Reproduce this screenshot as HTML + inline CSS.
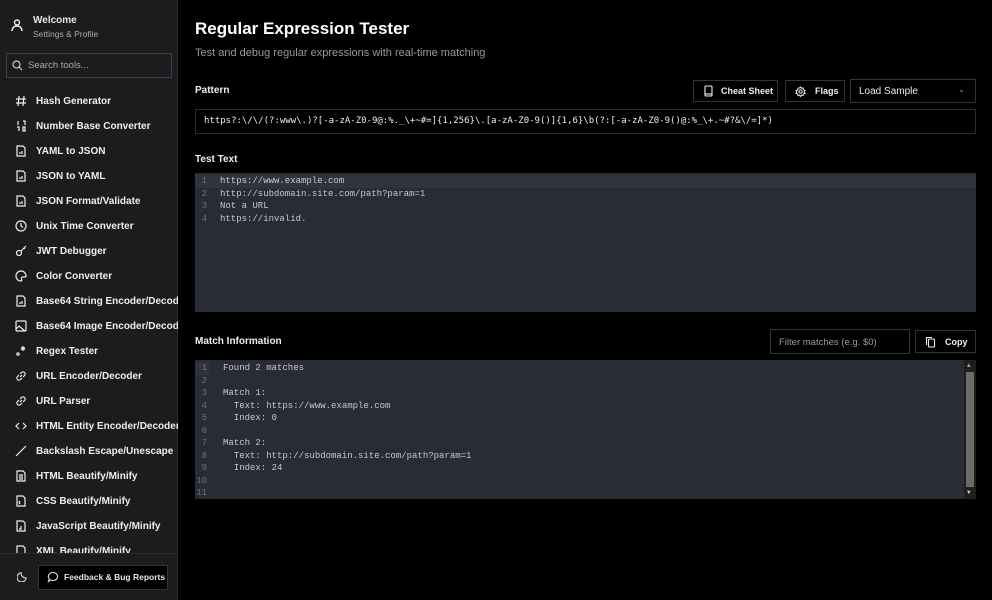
<!DOCTYPE html>
<html><head><meta charset="utf-8"><style>
*{box-sizing:border-box;margin:0;padding:0}
body{width:992px;height:600px;background:#000;font-family:"Liberation Sans",sans-serif;color:#e6e6e6;position:relative;overflow:hidden}
.sb{position:absolute;left:0;top:0;width:178px;height:600px;background:#1c1c1f;border-right:1px solid #2a2a2e}
.abs{position:absolute}
.item{position:absolute;left:0;height:20px;display:flex;align-items:center;font-size:10px;font-weight:bold;color:#eee;white-space:nowrap}
.item svg{position:absolute;left:15px;width:12px;height:12px}
.item span{position:absolute;left:36px}
.lbl{position:absolute;font-size:10px;font-weight:bold;color:#eee}
.btn{position:absolute;border:1px solid #333;background:#000;font-size:9px;font-weight:bold;color:#eee;display:flex;align-items:center}
.ed{position:absolute;background:#282c34;font-family:"Liberation Mono","Courier New",monospace;font-size:9px;color:#c8c8c8}
.ln{position:absolute;left:0;width:12px;text-align:right;color:#6b717d}
.tx{position:absolute;left:25px;white-space:pre}
</style></head><body>
<div class="sb">
 <svg class="abs" style="left:11px;top:18px" width="12" height="14" viewBox="0 0 12 14" fill="none" stroke="#eee" stroke-width="1.4"><circle cx="6" cy="4.5" r="2.5"/><path d="M1 13c0-3 2-5 5-5s5 2 5 5"/></svg>
 <div class="abs" style="left:33px;top:15px;font-size:10px;font-weight:bold">Welcome</div>
 <div class="abs" style="left:33px;top:29px;font-size:8.5px;color:#aaa">Settings &amp; Profile</div>
 <div class="abs" style="left:6px;top:53px;width:166px;height:25px;border:1px solid #3a3f46;background:#1c1c1f"></div>
 <svg class="abs" style="left:12px;top:60px" width="11" height="11" viewBox="0 0 11 11" fill="none" stroke="#ccc" stroke-width="1.2"><circle cx="4.5" cy="4.5" r="3.5"/><path d="M7 7l3 3"/></svg>
 <div class="abs" style="left:28px;top:60px;font-size:9.5px;color:#aaa">Search tools...</div>
 <div style="position:absolute;left:0;top:88px;width:178px;height:465px;overflow:hidden">
 <div class="item" style="top:3px"><svg viewBox="0 0 12 12" stroke="#eee" fill="none" stroke-width="1.2"><path d="M4 1L3 11M9 1L8 11M1 4h10M1 8h10"/></svg><span>Hash Generator</span></div>
 <div class="item" style="top:28px"><svg viewBox="0 0 12 12" stroke="#eee" fill="none" stroke-width="1.2"><path d="M3 1v4M8 1h2v4M2 7h2v4M8 7h2v4h-2z"/></svg><span>Number Base Converter</span></div>
 <div class="item" style="top:53px"><svg viewBox="0 0 12 12" stroke="#eee" fill="none" stroke-width="1.2"><path d="M2 1h6l2 2v8H2z M5 9V7M7 9V6"/></svg><span>YAML to JSON</span></div>
 <div class="item" style="top:78px"><svg viewBox="0 0 12 12" stroke="#eee" fill="none" stroke-width="1.2"><path d="M2 1h6l2 2v8H2z M5 9V7M7 9V6"/></svg><span>JSON to YAML</span></div>
 <div class="item" style="top:103px"><svg viewBox="0 0 12 12" stroke="#eee" fill="none" stroke-width="1.2"><path d="M2 1h6l2 2v8H2z M5 9V7M7 9V6"/></svg><span>JSON Format/Validate</span></div>
 <div class="item" style="top:128px"><svg viewBox="0 0 12 12" stroke="#eee" fill="none" stroke-width="1.2"><circle cx="6" cy="6" r="5"/><path d="M6 3v3l2 1.5"/></svg><span>Unix Time Converter</span></div>
 <div class="item" style="top:153px"><svg viewBox="0 0 12 12" stroke="#eee" fill="none" stroke-width="1.2"><circle cx="4" cy="8" r="2.5"/><path d="M6 6l5-5M9 3l1 1"/></svg><span>JWT Debugger</span></div>
 <div class="item" style="top:178px"><svg viewBox="0 0 12 12" stroke="#eee" fill="none" stroke-width="1.2"><path d="M6 1a5 5 0 000 10c1 0 1-1 .5-2s0-2 1.5-2H10a1 1 0 001-1A5 5 0 006 1z"/></svg><span>Color Converter</span></div>
 <div class="item" style="top:203px"><svg viewBox="0 0 12 12" stroke="#eee" fill="none" stroke-width="1.2"><path d="M2 1h6l2 2v8H2z M5 9V7M7 9V6"/></svg><span>Base64 String Encoder/Decoder</span></div>
 <div class="item" style="top:228px"><svg viewBox="0 0 12 12" stroke="#eee" fill="none" stroke-width="1.2"><rect x="1" y="1" width="10" height="10" rx="1"/><path d="M1 9l3-3 6 5M7 4h.1"/></svg><span>Base64 Image Encoder/Decoder</span></div>
 <div class="item" style="top:253px"><svg viewBox="0 0 12 12" stroke="#eee" fill="none" stroke-width="1.2"><circle cx="3" cy="9" r="1.2"/><path d="M8 1v5M6 2.5l4 2M10 2.5l-4 2"/></svg><span>Regex Tester</span></div>
 <div class="item" style="top:278px"><svg viewBox="0 0 12 12" stroke="#eee" fill="none" stroke-width="1.2"><path d="M5 7l2-2M4 5L2.5 6.5a2 2 0 003 3L7 8M8 7l1.5-1.5a2 2 0 00-3-3L5 4"/></svg><span>URL Encoder/Decoder</span></div>
 <div class="item" style="top:303px"><svg viewBox="0 0 12 12" stroke="#eee" fill="none" stroke-width="1.2"><path d="M5 7l2-2M4 5L2.5 6.5a2 2 0 003 3L7 8M8 7l1.5-1.5a2 2 0 00-3-3L5 4"/></svg><span>URL Parser</span></div>
 <div class="item" style="top:328px"><svg viewBox="0 0 12 12" stroke="#eee" fill="none" stroke-width="1.2"><path d="M4 3L1 6l3 3M8 3l3 3-3 3"/></svg><span>HTML Entity Encoder/Decoder</span></div>
 <div class="item" style="top:353px"><svg viewBox="0 0 12 12" stroke="#eee" fill="none" stroke-width="1.2"><path d="M11 1L1 11"/></svg><span>Backslash Escape/Unescape</span></div>
 <div class="item" style="top:378px"><svg viewBox="0 0 12 12" stroke="#eee" fill="none" stroke-width="1.2"><path d="M2 1h6l2 2v8H2z M4 5h4M4 7h4M4 9h4"/></svg><span>HTML Beautify/Minify</span></div>
 <div class="item" style="top:403px"><svg viewBox="0 0 12 12" stroke="#eee" fill="none" stroke-width="1.2"><path d="M2 1h6l2 2v8H2z M5 6L4 7.5 5 9"/></svg><span>CSS Beautify/Minify</span></div>
 <div class="item" style="top:428px"><svg viewBox="0 0 12 12" stroke="#eee" fill="none" stroke-width="1.2"><path d="M2 1h6l2 2v8H2z M6 6v3H4"/></svg><span>JavaScript Beautify/Minify</span></div>
 <div class="item" style="top:453px"><svg viewBox="0 0 12 12" stroke="#eee" fill="none" stroke-width="1.2"><path d="M2 1h6l2 2v8H2z"/></svg><span>XML Beautify/Minify</span></div>
 </div>
 <div class="abs" style="left:0;top:553px;width:178px;border-top:1px solid #2a2a2e"></div>
 <svg class="abs" style="left:17px;top:571px" width="11" height="11" viewBox="0 0 12 12" fill="none" stroke="#ddd" stroke-width="1.2"><path d="M10 7.5A5 5 0 014.5 2 5 5 0 1010 7.5z"/></svg>
 <div class="abs" style="left:38px;top:565px;width:130px;height:25px;border:1px solid #333;background:#000"></div>
 <svg class="abs" style="left:47px;top:571px" width="12" height="12" viewBox="0 0 12 12" fill="none" stroke="#ddd" stroke-width="1.1"><path d="M6 1.5a4.5 4 0 11-2.5 7.3L1.5 10.5l.8-2.6A4.5 4 0 016 1.5z"/></svg>
 <div class="abs" style="left:64px;top:572px;font-size:8.5px;font-weight:bold">Feedback &amp; Bug Reports</div>
</div>

<div class="abs" style="left:195px;top:19px;font-size:17px;font-weight:bold;color:#fff">Regular Expression Tester</div>
<div class="abs" style="left:195px;top:47px;font-size:11px;color:#999">Test and debug regular expressions with real-time matching</div>

<div class="lbl" style="left:195px;top:85px">Pattern</div>
<div class="btn" style="left:693px;top:80px;width:85px;height:22px"><svg style="margin:0 8px 0 10px" width="9" height="12" viewBox="0 0 9 12" fill="none" stroke="#eee" stroke-width="1.1"><rect x="1" y="1" width="7" height="10" rx="1"/><path d="M1 9h7"/></svg>Cheat Sheet</div>
<div class="btn" style="left:785px;top:80px;width:60px;height:22px"><svg style="margin:0 9px 0 9px" width="11" height="11" viewBox="0 0 12 12" fill="none" stroke="#eee" stroke-width="1.1"><circle cx="6" cy="6" r="1.8"/><path d="M6 1l1 1.5 1.8-.4.4 1.8L11 5 10 6.5l1 1.5-1.8.6-.4 1.8L7 10 6 11.5 5 10l-1.8.4-.4-1.8L1 8l1-1.5L1 5l1.8-.6.4-1.8L5 2z"/></svg>Flags</div>
<div class="btn" style="left:850px;top:79px;width:126px;height:24px;font-weight:normal;font-size:10px;padding-left:8px">Load Sample<span style="position:absolute;right:10px;top:5px;font-size:8px;color:#999">&#8964;</span></div>
<div class="abs" style="left:195px;top:109px;width:781px;height:25px;border:1px solid #2c2c30;background:#000;font-family:'DejaVu Sans Mono',monospace;font-size:9px;padding:6px 8px;white-space:nowrap;color:#eee">https?:\/\/(?:www\.)?[-a-zA-Z0-9@:%._\+~#=]{1,256}\.[a-zA-Z0-9()]{1,6}\b(?:[-a-zA-Z0-9()@:%_\+.~#?&amp;\/=]*)</div>

<div class="lbl" style="left:195px;top:154px">Test Text</div>
<div class="ed" style="left:195px;top:173px;width:781px;height:139px">
 <div class="abs" style="left:0;top:2px;width:781px;height:13px;background:#2f343d"></div>
 <div class="ln" style="top:3px">1</div><div class="tx" style="top:3px">https://www.example.com</div>
 <div class="ln" style="top:15.5px">2</div><div class="tx" style="top:15.5px">http://subdomain.site.com/path?param=1</div>
 <div class="ln" style="top:28px">3</div><div class="tx" style="top:28px">Not a URL</div>
 <div class="ln" style="top:40.5px">4</div><div class="tx" style="top:40.5px">https://invalid.</div>
</div>

<div class="lbl" style="left:195px;top:336px">Match Information</div>
<div class="abs" style="left:770px;top:329px;width:140px;height:25px;border:1px solid #333;font-size:9.5px;color:#999;padding:7px 8px">Filter matches (e.g. $0)</div>
<div class="btn" style="left:915px;top:330px;width:61px;height:23px"><svg style="margin:0 9px 0 9px" width="11" height="12" viewBox="0 0 11 12" fill="none" stroke="#eee" stroke-width="1.1"><rect x="3.5" y="3" width="6" height="8" rx="1"/><path d="M1.5 9V1.5H7"/></svg>Copy</div>
<div class="ed" style="left:195px;top:360px;width:781px;height:139px">
 <div class="abs" style="left:0;top:2px;width:15px;height:13px;background:#2f343d"></div>
 <div class="ln" style="top:3px">1</div><div class="tx" style="left:28px;top:3px">Found 2 matches</div>
 <div class="ln" style="top:15.5px">2</div>
 <div class="ln" style="top:28px">3</div><div class="tx" style="left:28px;top:28px">Match 1:</div>
 <div class="ln" style="top:40.5px">4</div><div class="tx" style="left:28px;top:40.5px">  Text: https://www.example.com</div>
 <div class="ln" style="top:53px">5</div><div class="tx" style="left:28px;top:53px">  Index: 0</div>
 <div class="ln" style="top:65.5px">6</div>
 <div class="ln" style="top:78px">7</div><div class="tx" style="left:28px;top:78px">Match 2:</div>
 <div class="ln" style="top:90.5px">8</div><div class="tx" style="left:28px;top:90.5px">  Text: http://subdomain.site.com/path?param=1</div>
 <div class="ln" style="top:103px">9</div><div class="tx" style="left:28px;top:103px">  Index: 24</div>
 <div class="ln" style="top:115.5px">10</div>
 <div class="ln" style="top:128px">11</div>
 <div class="abs" style="left:769px;top:0;width:12px;height:139px;background:#1e1e1e"></div>
 <div class="abs" style="left:771px;top:12px;width:8px;height:115px;background:#6b6b6b"></div>
 <div class="abs" style="left:772px;top:2px;font-size:6px;color:#aaa">&#9650;</div>
 <div class="abs" style="left:772px;top:129px;font-size:6px;color:#ccc">&#9660;</div>
</div>
</body></html>
